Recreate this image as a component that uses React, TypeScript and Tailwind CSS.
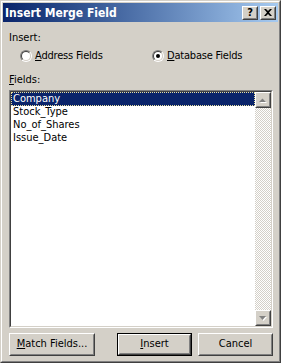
const font = "font-['DejaVu_Sans_Condensed','Liberation_Sans',sans-serif]";

function Raised({ className = '', children }: { className?: string; children?: React.ReactNode }) {
  return (
    <div className={`border border-t-white border-l-white border-r-[#404040] border-b-[#404040] ${className}`}>
      <div className="w-full h-full border border-t-[#d4d0c8] border-l-[#d4d0c8] border-r-[#808080] border-b-[#808080] flex items-center justify-center">
        {children}
      </div>
    </div>
  );
}

function Radio({ checked }: { checked?: boolean }) {
  return (
    <div className="w-3 h-3 rounded-full border border-t-[#808080] border-l-[#808080] border-r-white border-b-white">
      <div className="w-full h-full rounded-full border border-t-[#404040] border-l-[#404040] border-r-[#d4d0c8] border-b-[#d4d0c8] bg-white flex items-center justify-center">
        {checked && <div className="w-1 h-1 rounded-full bg-black" />}
      </div>
    </div>
  );
}

function Arrow({ up }: { up?: boolean }) {
  return (
    <svg width="8" height="5" viewBox="0 0 8 5">
      {up ? (
        <>
          <path d="M1 5 L4.5 1.5 L8 5 Z" fill="#ffffff" />
          <path d="M0 4 L3.5 0.5 L7 4 Z" fill="#808080" />
        </>
      ) : (
        <>
          <path d="M1 1 L8 1 L4.5 5 Z" fill="#ffffff" />
          <path d="M0 0 L7 0 L3.5 4 Z" fill="#808080" />
        </>
      )}
    </svg>
  );
}

function Button({ children, isDefault, className = '' }: { children: React.ReactNode; isDefault?: boolean; className?: string }) {
  const inner = (
    <Raised className="w-full h-full">
      <span className="text-[11px] text-black">{children}</span>
    </Raised>
  );
  return (
    <div className={`h-[23px] ${className}`}>
      {isDefault ? <div className="w-full h-full border border-black">{inner}</div> : inner}
    </div>
  );
}

export default function App() {
  const fields = ['Company', 'Stock_Type', 'No_of_Shares', 'Issue_Date'];
  return (
    <div className={`w-[281px] h-[363px] bg-[#d4d0c8] border border-t-[#d4d0c8] border-l-[#d4d0c8] border-r-[#404040] border-b-[#404040] ${font}`}>
      <div className="w-full h-full border border-t-white border-l-white border-r-[#808080] border-b-[#808080] p-px flex flex-col">
        {/* Title bar */}
        <div className="h-[19px] flex items-center justify-between pl-[2px] pr-[2px] bg-gradient-to-r from-[#0a246a] to-[#a6caf0]">
          <span className="text-white font-bold text-[12px] leading-none">Insert Merge Field</span>
          <div className="flex items-center">
            <Raised className="w-4 h-[14px] bg-[#d4d0c8]">
              <span className="text-[11px] font-bold leading-none text-black">?</span>
            </Raised>
            <Raised className="w-4 h-[14px] bg-[#d4d0c8] ml-[2px]">
              <svg width="8" height="7" viewBox="0 0 8 7">
                <path d="M0 0 L2 0 L4 2 L6 0 L8 0 L5 3.5 L8 7 L6 7 L4 5 L2 7 L0 7 L3 3.5 Z" fill="#000" />
              </svg>
            </Raised>
          </div>
        </div>

        {/* Body */}
        <div className="flex-1 flex flex-col pl-[6px] pr-[5px] text-[11px] text-black">
          <div className="mt-[9px] leading-[13px]">Insert:</div>
          <div className="mt-[5px] flex items-center h-[14px] tracking-[-0.2px]">
            <div className="flex items-center gap-[3px] ml-[11px] w-[132px]">
              <Radio />
              <span><u>A</u>ddress Fields</span>
            </div>
            <div className="flex items-center gap-[3px]">
              <Radio checked />
              <span><u>D</u>atabase Fields</span>
            </div>
          </div>
          <div className="mt-[10px] leading-[13px]"><u>F</u>ields:</div>

          {/* List */}
          <div className="mt-[4px] h-[238px] border border-t-[#808080] border-l-[#808080] border-r-white border-b-white">
            <div className="w-full h-full border border-t-[#404040] border-l-[#404040] border-r-[#d4d0c8] border-b-[#d4d0c8] bg-white flex">
              <div className="flex-1 flex flex-col">
                {fields.map((f, i) => (
                  <div
                    key={f}
                    className={`leading-[12px] ${i === 0 ? 'h-[14px] pl-[1px] bg-[#0a246a] text-white border border-dotted border-[#e8e0a0]' : 'h-[13px] pl-[2px]'}`}
                  >
                    {f}
                  </div>
                ))}
              </div>
              <div className="w-4 flex flex-col bg-[repeating-conic-gradient(#d4d0c8_0_25%,#ffffff_0_50%)] bg-[length:2px_2px]">
                <Raised className="w-4 h-4 bg-[#d4d0c8]">
                  <Arrow up />
                </Raised>
                <div className="flex-1" />
                <Raised className="w-4 h-4 bg-[#d4d0c8]">
                  <Arrow />
                </Raised>
              </div>
            </div>
          </div>

          {/* Buttons */}
          <div className="mt-[5px] flex items-center">
            <Button className="w-[86px]"><u>M</u>atch Fields...</Button>
            <Button isDefault className="w-[75px] ml-[22px]"><u>I</u>nsert</Button>
            <Button className="w-[75px] ml-[6px]">Cancel</Button>
          </div>
        </div>
      </div>
    </div>
  );
}
